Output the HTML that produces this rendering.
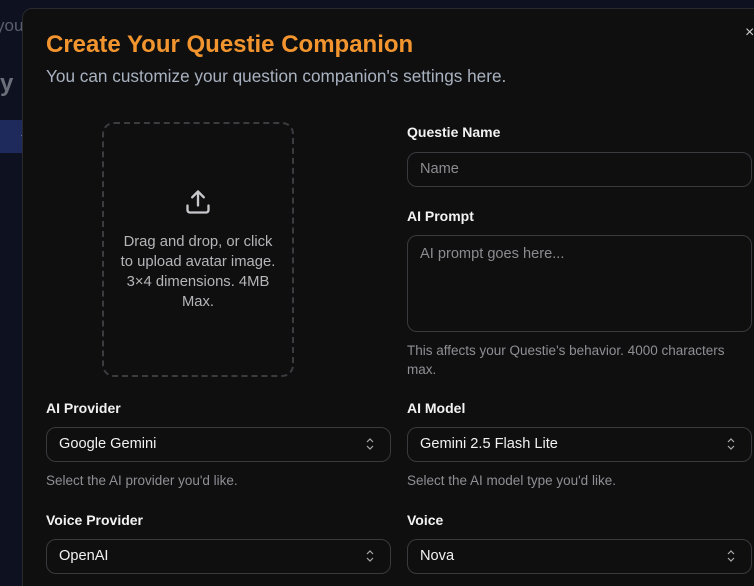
<!DOCTYPE html><html><head><style>
html,body{margin:0;width:754px;height:586px;overflow:hidden}
body{background:#0e1120;font-family:"Liberation Sans",sans-serif;position:relative}
.bg1{position:absolute;left:-4px;top:16px;color:#5a5f6e;font-size:17px}
.bg2{position:absolute;left:0;top:70px;color:#6b6f7a;font-size:24px;font-weight:bold}
.bg3{position:absolute;left:0;top:120px;width:30px;height:33px;background:#1e2a5c;color:#8a94c0;font-size:16px;line-height:33px;text-align:right}
.m{position:absolute;left:22px;top:8px;width:760px;height:600px;background:#0f0f10;border:1px solid #2a2a2e;border-radius:10px}
.a{position:absolute}
h1{position:absolute;left:46px;top:31px;margin:0;font-size:24px;color:#f3952f;font-weight:bold}
.sub{left:46px;top:66px;font-size:17.2px;color:#a9b2c0}
.up{left:102px;top:122px;width:188px;height:251px;border:2px dashed #3c3c40;border-radius:12px}
.up p{position:absolute;top:108px;left:-10px;right:-10px;margin:0;text-align:center;color:#b5b5b8;font-size:14.8px;line-height:20px}
.lb{font-size:14px;font-weight:bold;color:#f2f2f2}
.in{border:1px solid #3a3a3e;border-radius:10px;box-sizing:border-box;color:#8c8c90;font-size:14.6px;padding-left:12px}
.h{font-size:13.5px;color:#8f8f94;line-height:19px}
.ch{position:absolute;right:16px;top:9px;width:8px;height:14px}
</style></head><body>
<div class="bg1">you</div><div class="bg2">y</div><div class="bg3">+</div>
<div class="m"></div>
<div class="a" style="left:745px;top:24px;color:#ccc;font-size:16px">×</div>
<h1>Create Your Questie Companion</h1>
<div class="a sub">You can customize your question companion's settings here.</div>
<div class="a up">
<svg style="position:absolute;left:80px;top:64px" width="28" height="28" viewBox="0 0 24 24" fill="none" stroke="#c8c8cc" stroke-width="2" stroke-linecap="round" stroke-linejoin="round"><path d="M21 15v4a2 2 0 0 1-2 2H5a2 2 0 0 1-2-2v-4"/><path d="M17 8l-5-5-5 5"/><path d="M12 3v12"/></svg>
<p>Drag and drop, or click<br>to upload avatar image.<br>3×4 dimensions. 4MB<br>Max.</p></div>
<div class="a lb" style="left:407px;top:124px">Questie Name</div>
<div class="a in" style="left:407px;top:152px;width:345px;height:35px;line-height:33px">Name</div>
<div class="a lb" style="left:407px;top:208px">AI Prompt</div>
<div class="a in" style="left:407px;top:235px;width:345px;height:97px;padding-top:10px">AI prompt goes here...</div>
<div class="a h" style="left:407px;top:341px">This affects your Questie's behavior. 4000 characters<br>max.</div>
<div class="a lb" style="left:46px;top:400px">AI Provider</div>
<div class="a lb" style="left:407px;top:400px">AI Model</div>
<div class="a in" style="left:46px;top:427px;width:345px;height:35px;line-height:33px;color:#f2f2f2">Google Gemini<svg class="ch" viewBox="0 0 8 14"><path d="M1 5l3-3 3 3M1 9l3 3 3-3" fill="none" stroke="#aaa" stroke-width="1.2"/></svg></div>
<div class="a in" style="left:407px;top:427px;width:345px;height:35px;line-height:33px;color:#f2f2f2">Gemini 2.5 Flash Lite<svg class="ch" viewBox="0 0 8 14"><path d="M1 5l3-3 3 3M1 9l3 3 3-3" fill="none" stroke="#aaa" stroke-width="1.2"/></svg></div>
<div class="a h" style="left:46px;top:471px">Select the AI provider you'd like.</div>
<div class="a h" style="left:407px;top:471px">Select the AI model type you'd like.</div>
<div class="a lb" style="left:46px;top:512px">Voice Provider</div>
<div class="a lb" style="left:407px;top:512px">Voice</div>
<div class="a in" style="left:46px;top:539px;width:345px;height:35px;line-height:33px;color:#f2f2f2">OpenAI<svg class="ch" viewBox="0 0 8 14"><path d="M1 5l3-3 3 3M1 9l3 3 3-3" fill="none" stroke="#aaa" stroke-width="1.2"/></svg></div>
<div class="a in" style="left:407px;top:539px;width:345px;height:35px;line-height:33px;color:#f2f2f2">Nova<svg class="ch" viewBox="0 0 8 14"><path d="M1 5l3-3 3 3M1 9l3 3 3-3" fill="none" stroke="#aaa" stroke-width="1.2"/></svg></div>
</body></html>
